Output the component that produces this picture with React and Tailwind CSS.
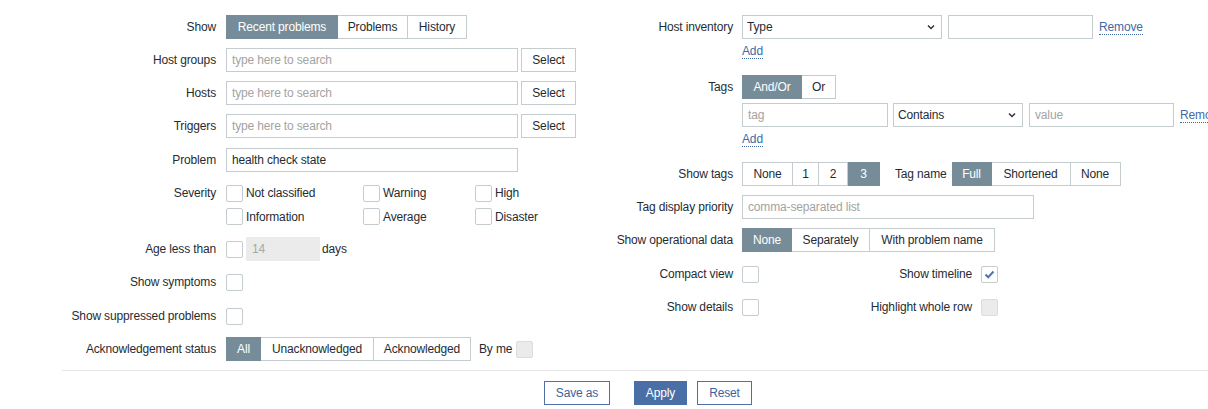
import React from "react";

const font = { fontFamily: '"Liberation Sans", Arial, sans-serif' };

function Segments({ items, active }) {
  return (
    <div className="flex h-[24px]">
      {items.map(([text, w], i) => (
        <div
          key={text + i}
          className={
            (i === active
              ? "bg-[#768d99] text-white border-[#768d99] "
              : "bg-white text-[#1f2c33] border-[#c5ccd0] ") +
            (i === 0 ? "border " : "border border-l-0 ") +
            (i === active && i !== 0 ? "border-l " : "") +
            w +
            " flex items-center justify-center h-[24px]"
          }
        >
          {text}
        </div>
      ))}
    </div>
  );
}

function Box({ checked, disabled }) {
  return (
    <div
      className={
        "w-[17px] h-[17px] border rounded-[2px] shrink-0 flex items-center justify-center " +
        (disabled ? "bg-[#ebebeb] border-[#dcdcdc]" : "bg-white border-[#c5ccd0]")
      }
    >
      {checked && (
        <svg width="11" height="9" viewBox="0 0 11 9">
          <polyline points="1.5,4.5 4.2,7.2 9.5,1.5" fill="none" stroke="#4a75b0" strokeWidth="2" />
        </svg>
      )}
    </div>
  );
}

function Input({ w, placeholder, value, disabled }) {
  return (
    <div
      className={
        w +
        " h-[24px] border px-[5px] flex items-center " +
        (disabled ? "bg-[#ebebeb] border-[#ebebeb] text-[#a8a8a8]" : "bg-white border-[#c5ccd0]")
      }
    >
      {value ? <span>{value}</span> : <span className="text-[#a3a3a3]">{placeholder}</span>}
    </div>
  );
}

function Select({ w, value }) {
  return (
    <div className={w + " h-[24px] border border-[#c5ccd0] bg-white pl-[4px] pr-[6px] flex items-center justify-between"}>
      <span>{value}</span>
      <svg width="8" height="6" viewBox="0 0 8 6">
        <polyline points="1,1.5 4,4.5 7,1.5" fill="none" stroke="#333" strokeWidth="1.5" />
      </svg>
    </div>
  );
}

function Btn({ w, children }) {
  return (
    <div className={w + " h-[24px] border border-[#c5ccd0] bg-white flex items-center justify-center"}>{children}</div>
  );
}

function Link({ children }) {
  return <span className="text-[#3f6aa6] border-b border-dotted border-[#3f6aa6] leading-[14px]">{children}</span>;
}

function Row({ label, children, lw = "w-[154px]", gap = "gap-[10px]", tall }) {
  return (
    <div className={"flex items-start " + gap}>
      <div className={lw + " shrink-0 h-[24px] flex items-center justify-end whitespace-nowrap"}>{label}</div>
      <div className={tall ? "" : "h-[24px] flex items-center"}>{children}</div>
    </div>
  );
}

export default function App() {
  const sev = [
    ["Not classified", "Warning", "High"],
    ["Information", "Average", "Disaster"],
  ];
  return (
    <div style={font} className="w-[1208px] h-[409px] bg-white text-[12px] tracking-[-0.15px] text-[#1f2c33] overflow-hidden">
      <div className="flex pt-[15px]">
        {/* left column */}
        <div className="w-[538px] ml-[62px] shrink-0 flex flex-col gap-[9px]">
          <Row label="Show">
            <Segments active={0} items={[["Recent problems", "w-[112px]"], ["Problems", "w-[70px]"], ["History", "w-[59px]"]]} />
          </Row>
          {["Host groups", "Hosts", "Triggers"].map((l) => (
            <Row key={l} label={l}>
              <div className="flex gap-[3px]">
                <Input w="w-[292px]" placeholder="type here to search" />
                <Btn w="w-[55px]">Select</Btn>
              </div>
            </Row>
          ))}
          <div className="mt-[1px]">
            <Row label="Problem">
              <Input w="w-[292px]" value="health check state" />
            </Row>
          </div>
          <Row label="Severity" tall>
            <div className="flex flex-col">
              {sev.map((r, ri) => (
                <div key={ri} className={"flex items-center " + (ri === 0 ? "h-[24px]" : "h-[23px]")}>
                  {r.map((t, ci) => (
                    <div key={t} className={"flex items-center gap-[3px] " + (ci === 0 ? "w-[137px]" : ci === 1 ? "w-[112px]" : "")}>
                      <Box />
                      <span>{t}</span>
                    </div>
                  ))}
                </div>
              ))}
            </div>
          </Row>
          <Row label="Age less than">
            <div className="flex items-center">
              <Box />
              <div className="ml-[3px]">
                <Input w="w-[74px]" value="14" disabled />
              </div>
              <span className="ml-[2px]">days</span>
            </div>
          </Row>
          <Row label="Show symptoms">
            <Box />
          </Row>
          <div className="mt-[1px]">
            <Row label="Show suppressed problems">
              <Box />
            </Row>
          </div>
          <Row label="Acknowledgement status">
            <div className="flex items-center">
              <Segments active={0} items={[["All", "w-[35px]"], ["Unacknowledged", "w-[113px]"], ["Acknowledged", "w-[97px]"]]} />
              <span className="ml-[8px]">By me</span>
              <div className="ml-[4px]">
                <Box disabled />
              </div>
            </div>
          </Row>
        </div>

        {/* right column */}
        <div className="flex flex-col shrink-0">
          <Row label="Host inventory" lw="w-[133px]" gap="gap-[9px]" tall>
            <div className="flex flex-col items-start">
              <div className="flex items-center gap-[6px] h-[24px]">
                <Select w="w-[200px]" value="Type" />
                <Input w="w-[145px]" />
                <Link>Remove</Link>
              </div>
              <div className="mt-[4px] h-[16px] flex items-center">
                <Link>Add</Link>
              </div>
            </div>
          </Row>
          <div className="mt-[16px]">
            <Row label="Tags" lw="w-[133px]" gap="gap-[9px]" tall>
              <div className="flex flex-col items-start">
                <Segments active={0} items={[["And/Or", "w-[60px]"], ["Or", "w-[34px]"]]} />
                <div className="mt-[4px] flex items-center h-[24px]">
                  <Input w="w-[146px]" placeholder="tag" />
                  <div className="ml-[5px]">
                    <Select w="w-[130px]" value="Contains" />
                  </div>
                  <div className="ml-[6px]">
                    <Input w="w-[145px]" placeholder="value" />
                  </div>
                  <span className="ml-[6px] whitespace-nowrap">
                    <Link>Remove</Link>
                  </span>
                </div>
                <div className="mt-[4px] h-[16px] flex items-center">
                  <Link>Add</Link>
                </div>
              </div>
            </Row>
          </div>
          <div className="mt-[15px] flex flex-col gap-[9px]">
            <Row label="Show tags" lw="w-[133px]" gap="gap-[9px]">
              <div className="flex items-center">
                <Segments active={3} items={[["None", "w-[51px]"], ["1", "w-[26px]"], ["2", "w-[29px]"], ["3", "w-[32px]"]]} />
                <span className="ml-[15px] mr-[5px]">Tag name</span>
                <Segments active={0} items={[["Full", "w-[40px]"], ["Shortened", "w-[79px]"], ["None", "w-[50px]"]]} />
              </div>
            </Row>
            <Row label="Tag display priority" lw="w-[133px]" gap="gap-[9px]">
              <Input w="w-[292px]" placeholder="comma-separated list" />
            </Row>
            <Row label="Show operational data" lw="w-[133px]" gap="gap-[9px]">
              <Segments active={0} items={[["None", "w-[50px]"], ["Separately", "w-[78px]"], ["With problem name", "w-[125px]"]]} />
            </Row>
            <div className="mt-[1px]">
              <Row label="Compact view" lw="w-[133px]" gap="gap-[9px]">
                <div className="flex items-center">
                  <Box />
                  <div className="w-[222px] text-right pr-[9px]">Show timeline</div>
                  <Box checked />
                </div>
              </Row>
            </div>
            <Row label="Show details" lw="w-[133px]" gap="gap-[9px]">
              <div className="flex items-center">
                <Box />
                <div className="w-[222px] text-right pr-[9px]">Highlight whole row</div>
                <Box disabled />
              </div>
            </Row>
          </div>
        </div>
      </div>

      <div className="ml-[62px] mt-[9px] border-t border-[#e6e6e6]" />

      <div className="mt-[10px] ml-[544px] flex items-center">
        <div className="w-[66px] h-[24px] border border-[#4f70a6] text-[#3c639c] flex items-center justify-center">Save as</div>
        <div className="ml-[24px] w-[53px] h-[24px] bg-[#4a6fa7] text-white flex items-center justify-center">Apply</div>
        <div className="ml-[10px] w-[55px] h-[24px] border border-[#4f70a6] text-[#3c639c] flex items-center justify-center">Reset</div>
      </div>
    </div>
  );
}
